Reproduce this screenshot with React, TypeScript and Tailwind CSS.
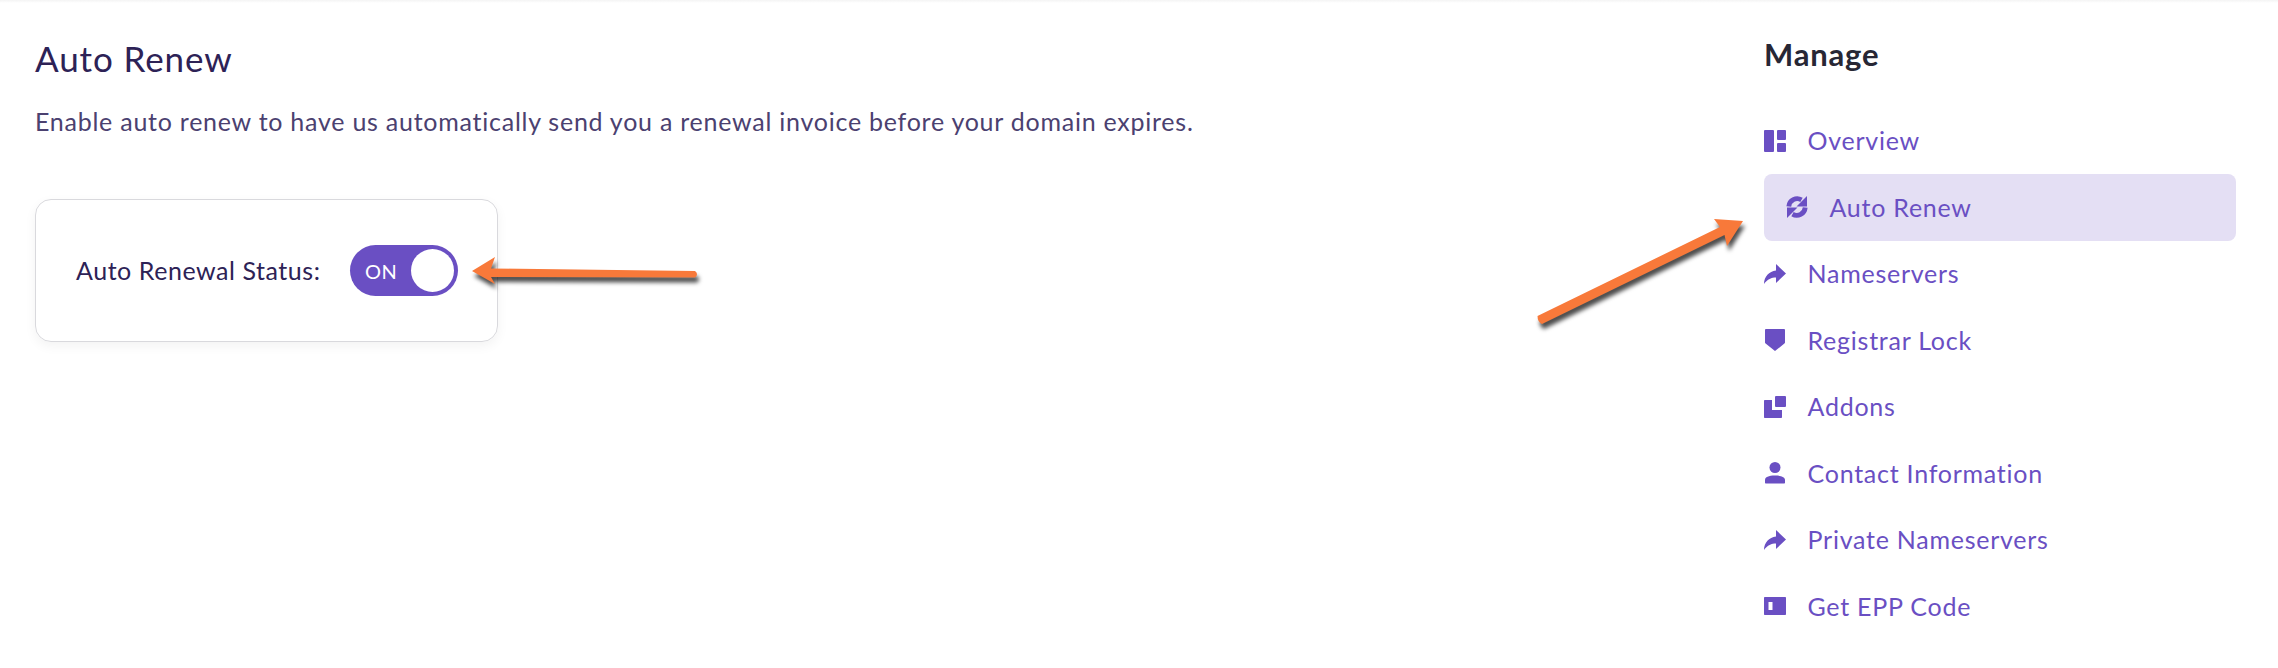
const purple = "#6a4fc3";

const items = [
  { label: "Overview", icon: "overview" },
  { label: "Auto Renew", icon: "sync", active: true },
  { label: "Nameservers", icon: "share" },
  { label: "Registrar Lock", icon: "shield" },
  { label: "Addons", icon: "addons" },
  { label: "Contact Information", icon: "user" },
  { label: "Private Nameservers", icon: "share" },
  { label: "Get EPP Code", icon: "card" },
];

const NavIcon = ({ name }: { name: string }) => (
  <svg viewBox="0 0 22 22" fill={purple} className="h-[22px] w-[22px] shrink-0">
    {name === "overview" && (
      <>
        <rect x="0" y="0" width="10" height="22" rx="1" />
        <rect x="13" y="0" width="9" height="10" rx="1" />
        <rect x="13" y="13" width="9" height="9" rx="1" />
      </>
    )}
    {name === "sync" && (
      <>
        <path d="M2.800 10.500A8.500 8.500 0 0 1 15.500 3.800" fill="none" stroke={purple} strokeWidth="4.800" />
        <path d="M21 0V10.500H10.500Z" />
        <path d="M19.200 11.500A8.500 8.500 0 0 1 6.500 18.200" fill="none" stroke={purple} strokeWidth="4.800" />
        <path d="M1 22V11.500H11.500Z" />
      </>
    )}
    {name === "share" && (
      <path d="M12 1l10 9.500-10 9.500v-5.500C7.500 14.500 3.500 16 0 21c.2-7.500 5-12.500 12-13.500V1z" />
    )}
    {name === "shield" && (
      <path d="M2 0h18c.5 0 1 .5 1 1v12.500c0 .5-.2.800-.6 1.100L11 22 1.600 14.600c-.4-.3-.6-.6-.6-1.100V1c0-.5.500-1 1-1z" />
    )}
    {name === "addons" && (
      <>
        <rect x="11" y="0" width="11" height="11" rx="1" />
        <path d="M1 4h7v10h10v7c0 .6-.4 1-1 1H1c-.6 0-1-.4-1-1V5c0-.6.4-1 1-1z" />
      </>
    )}
    {name === "user" && (
      <>
        <circle cx="11" cy="5.500" r="5.500" />
        <path d="M2 21.500c-.6 0-1-.4-1-1V18c0-3 3.500-4.500 10-4.500S21 15 21 18v2.500c0 .6-.4 1-1 1H2z" />
      </>
    )}
    {name === "card" && (
      <path
        fillRule="evenodd"
        d="M1 2h20c.6 0 1 .4 1 1v16c0 .6-.4 1-1 1H1c-.6 0-1-.4-1-1V3c0-.6.400-1 1-1zm3.500 5v8h4V7h-4z"
      />
    )}
  </svg>
);

export default function App() {
  return (
    <div className="relative h-[668px] w-full overflow-hidden bg-white font-['Lato','Noto_Sans',sans-serif]">
      <div className="h-[3px] bg-gradient-to-b from-[#f4f4f4] to-white" />

      <div className="flex justify-between pl-[35px] pr-[42px]">
        <main className="pt-[35px]">
          <h1 className="text-[35px] leading-[40px] tracking-[0.9px] text-[#2d2256]">Auto Renew</h1>
          <p className="mt-[27px] text-[25px] leading-[32px] tracking-[0.75px] text-[#4b4170]">
            Enable auto renew to have us automatically send you a renewal invoice before your domain expires.
          </p>
          <div className="mt-[62px] flex h-[143px] w-[463px] items-center justify-between rounded-[16px] border border-[#d9d9dd] pl-[40px] pr-[39px] shadow-[0_4px_12px_rgba(0,0,0,0.05)]">
            <span className="text-[25px] tracking-[0.55px] text-[#2d2256]">Auto Renewal Status:</span>
            <div className="flex h-[51px] w-[108px] items-center justify-between rounded-full bg-[#6a4fc3] pl-[15px] pr-[4px]">
              <span className="text-[20px] tracking-[0.5px] text-white">ON</span>
              <span className="h-[43px] w-[43px] rounded-full bg-white" />
            </div>
          </div>
        </main>

        <aside className="w-[472px] pt-[32px]">
          <h2 className="text-[31px] font-bold leading-[38px] tracking-[0.8px] text-[#272735]">Manage</h2>
          <nav className="mt-[34.5px]">
            {items.map((item) => (
              <div
                key={item.label}
                className={
                  item.active
                    ? "flex h-[66.5px] items-center gap-[21.5px] rounded-[8px] bg-[#e4dff4] pl-[22px] text-[25px] tracking-[0.75px] text-[#6a4fc3]"
                    : "flex h-[66.5px] items-center gap-[21.5px] text-[25px] tracking-[0.75px] text-[#6a4fc3]"
                }
              >
                <NavIcon name={item.icon} />
                <span>{item.label}</span>
              </div>
            ))}
          </nav>
        </aside>
      </div>

      {/* annotation arrows drawn on top of the page */}
      <svg
        className="pointer-events-none absolute left-0 top-0 h-[668px] w-[2278px] drop-shadow-[2px_5px_2px_rgba(0,0,0,0.7)]"
        viewBox="0 0 2278 668"
      >
        <path
          d="M472 271L495 257L491 268.500L695 271Q699 274 695 277.500L491 277L495 284Z"
          fill="#f8793a"
        />
        <path
          d="M1743 221L1714 219L1720 227L1537.500 316Q1537.500 322 1542 324L1724.500 235L1727 246Z"
          fill="#f8793a"
        />
      </svg>
    </div>
  );
}
